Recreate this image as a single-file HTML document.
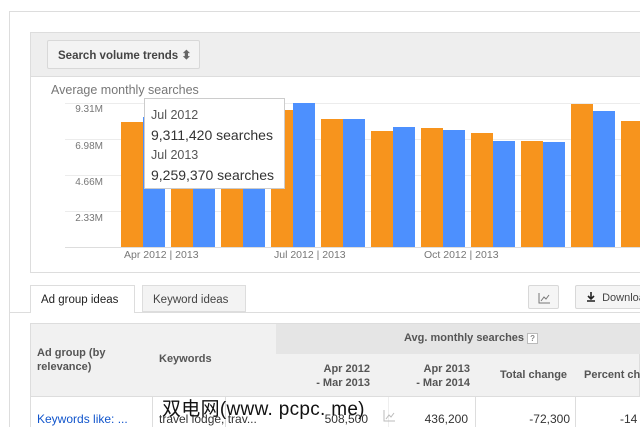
<!DOCTYPE html>
<html><head><meta charset="utf-8"><style>
*{margin:0;padding:0;box-sizing:border-box}
body{width:640px;height:427px;overflow:hidden;background:#fff;font-family:"Liberation Sans",Arial,sans-serif;position:relative}
.a{position:absolute}
.o{position:absolute;background:#f7941d;width:22px}
.b{position:absolute;background:#4d90fe;width:22px}
.gl{position:absolute;left:65px;right:0;height:1px;background:#ececec}
.yl{position:absolute;width:50px;left:53px;text-align:right;font-size:10px;color:#777}
.xl{position:absolute;top:249px;font-size:10.5px;color:#777}
</style></head><body>
<div class="a" style="left:9px;top:11px;width:631px;height:1px;background:#ddd"></div>
<div class="a" style="left:9px;top:11px;width:1px;height:416px;background:#ddd"></div>
<div class="a" style="left:30px;top:32px;width:612px;height:241px;border:1px solid #ddd;background:#fff"></div>
<div class="a" style="left:31px;top:33px;width:609px;height:44px;background:#eee;border-bottom:1px solid #ddd"></div>
<div class="a" style="left:47px;top:40px;width:153px;height:29px;background:#f3f3f3;border:1px solid #d8d8d8;border-radius:2px;font-size:11.5px;font-weight:bold;color:#444;padding:7px 0 0 10px;white-space:nowrap">Search volume trends <span style="font-size:12px;color:#666">&#x2B0D;</span></div>
<div class="a" style="left:51px;top:83px;font-size:12.5px;color:#777">Average monthly searches</div>
<div class="gl" style="top:103px"></div><div class="gl" style="top:139px"></div><div class="gl" style="top:175px"></div><div class="gl" style="top:211px"></div><div class="gl" style="top:247px;background:#ddd"></div>
<div class="yl" style="top:104px">9.31M</div><div class="yl" style="top:141px">6.98M</div><div class="yl" style="top:177px">4.66M</div><div class="yl" style="top:213px">2.33M</div>
<div class="o" style="left:121px;top:122px;height:125px"></div><div class="b" style="left:143px;top:117px;height:130px"></div>
<div class="o" style="left:171px;top:130px;height:117px"></div><div class="b" style="left:193px;top:130px;height:117px"></div>
<div class="o" style="left:221px;top:130px;height:117px"></div><div class="b" style="left:243px;top:130px;height:117px"></div>
<div class="o" style="left:271px;top:110px;height:137px"></div><div class="b" style="left:293px;top:103px;height:144px"></div>
<div class="o" style="left:321px;top:119px;height:128px"></div><div class="b" style="left:343px;top:119px;height:128px"></div>
<div class="o" style="left:371px;top:131px;height:116px"></div><div class="b" style="left:393px;top:127px;height:120px"></div>
<div class="o" style="left:421px;top:128px;height:119px"></div><div class="b" style="left:443px;top:130px;height:117px"></div>
<div class="o" style="left:471px;top:133px;height:114px"></div><div class="b" style="left:493px;top:141px;height:106px"></div>
<div class="o" style="left:521px;top:141px;height:106px"></div><div class="b" style="left:543px;top:142px;height:105px"></div>
<div class="o" style="left:571px;top:104px;height:143px"></div><div class="b" style="left:593px;top:111px;height:136px"></div>
<div class="o" style="left:621px;top:121px;height:126px"></div>
<div class="xl" style="left:124px">Apr 2012 | 2013</div><div class="xl" style="left:274px">Jul 2012 | 2013</div><div class="xl" style="left:424px">Oct 2012 | 2013</div>
<div class="a" style="left:144px;top:98px;width:141px;height:91px;background:#fff;border:1px solid #ccc;padding:6px 0 0 6px;line-height:20px;color:#333">
<div style="font-size:12.5px;color:#555">Jul 2012</div><div style="font-size:14px">9,311,420 searches</div>
<div style="font-size:12.5px;color:#555">Jul 2013</div><div style="font-size:14px">9,259,370 searches</div></div>
<div class="a" style="left:9px;top:312px;width:631px;height:1px;background:#ddd"></div>
<div class="a" style="left:30px;top:285px;width:105px;height:28px;background:#fff;border:1px solid #ddd;border-bottom:none;font-size:11.5px;color:#222;padding:8px 0 0 10px">Ad group ideas</div>
<div class="a" style="left:142px;top:285px;width:104px;height:27px;background:#f3f3f3;border:1px solid #ddd;font-size:11.5px;color:#444;padding:8px 0 0 10px">Keyword ideas</div>
<div class="a" style="left:528px;top:285px;width:31px;height:24px;background:#f5f5f5;border:1px solid #d8d8d8;border-radius:2px"><svg width="31" height="24"><path d="M10 7v10h11M12 15l3-4 2 2 3-4" stroke="#777" fill="none" stroke-width="1"/></svg></div>
<div class="a" style="left:575px;top:285px;width:70px;height:24px;background:#f5f5f5;border:1px solid #d8d8d8;border-radius:2px;font-size:11px;color:#444;padding:5px 0 0 10px;white-space:nowrap;overflow:hidden"><svg width="10" height="11" style="vertical-align:-1px"><path d="M5 1v7M2 5l3 3 3-3M1 10h8" stroke="#222" stroke-width="1.6" fill="none"/></svg>&nbsp; Download</div>
<div class="a" style="left:30px;top:323px;width:610px;height:74px;background:#f1f1f1;border:1px solid #ddd"></div>
<div class="a" style="left:276px;top:324px;width:364px;height:30px;background:#e5e5e5"></div>
<div class="a" style="left:404px;top:332px;font-size:11px;font-weight:bold;color:#555">Avg. monthly searches <span style="border:1px solid #bbb;font-size:8px;padding:0 2px;color:#888;background:#fff">?</span></div>
<div class="a" style="left:37px;top:346px;font-size:11px;font-weight:bold;color:#555;line-height:14px">Ad group (by<br>relevance)</div>
<div class="a" style="left:159px;top:353px;font-size:11px;font-weight:bold;color:#555">Keywords</div>
<div class="a" style="left:290px;top:362px;width:80px;text-align:right;font-size:11px;font-weight:bold;color:#555;line-height:14px">Apr 2012<br>- Mar 2013</div>
<div class="a" style="left:370px;top:362px;width:100px;text-align:right;font-size:11px;font-weight:bold;color:#555;line-height:14px">Apr 2013<br>- Mar 2014</div>
<div class="a" style="left:500px;top:369px;font-size:11px;font-weight:bold;color:#555">Total change</div>
<div class="a" style="left:584px;top:369px;font-size:11px;font-weight:bold;color:#555;white-space:nowrap">Percent change</div>
<div class="a" style="left:30px;top:397px;width:1px;height:30px;background:#ddd"></div>
<div class="a" style="left:152px;top:397px;width:1px;height:30px;background:#ddd"></div>
<div class="a" style="left:225px;top:397px;width:1px;height:30px;background:#ddd"></div>
<div class="a" style="left:388px;top:397px;width:1px;height:30px;background:#eee"></div>
<div class="a" style="left:475px;top:397px;width:1px;height:30px;background:#ddd"></div>
<div class="a" style="left:575px;top:397px;width:1px;height:30px;background:#ddd"></div>
<div class="a" style="left:37px;top:412px;font-size:12px;color:#15c">Keywords like: ...</div>
<div class="a" style="left:159px;top:412px;font-size:12px;color:#333">travel lodge, trav...</div>
<div class="a" style="left:300px;top:412px;width:68px;text-align:right;font-size:12px;color:#333">508,500</div>
<svg class="a" style="left:382px;top:409px" width="14" height="14"><path d="M2 1v11h11M4 10l3-4 2 2 3-4" stroke="#bbb" fill="none"/></svg>
<div class="a" style="left:400px;top:412px;width:68px;text-align:right;font-size:12px;color:#333">436,200</div>
<div class="a" style="left:500px;top:412px;width:70px;text-align:right;font-size:12px;color:#333">-72,300</div>
<div class="a" style="left:620px;top:412px;font-size:12px;color:#333">-14</div>
<div class="a" style="left:162px;top:394px;font-size:19px;color:#111;font-family:'Liberation Sans','WenQuanYi Zen Hei',sans-serif;white-space:nowrap;letter-spacing:0.3px">双电网(www. pcpc. me)</div>
</body></html>
